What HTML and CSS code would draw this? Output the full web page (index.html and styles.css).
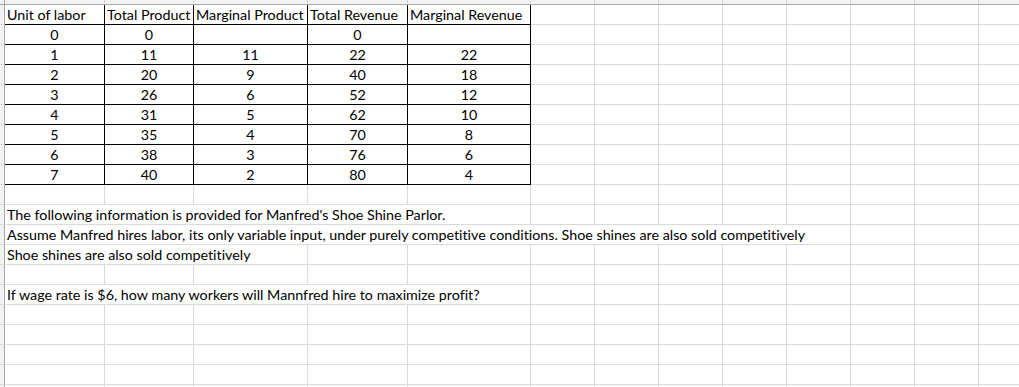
FILE: index.html
```html
<!DOCTYPE html>
<html>
<head>
<meta charset="utf-8">
<link rel="stylesheet" href="styles.css">
</head>
<body>
<div class="sheet">
  <div class="row head">
    <div class="c corner"></div><div class="c"></div><div class="c"></div><div class="c"></div><div class="c"></div><div class="c"></div><div class="c"></div><div class="c"></div><div class="c"></div><div class="c"></div><div class="c"></div><div class="c"></div><div class="c"></div><div class="c"></div>
  </div>
  <div class="row">
    <div class="c rh"></div><div class="c t">Unit of labor</div><div class="c t">Total Product</div><div class="c t">Marginal Product</div><div class="c t">Total Revenue</div><div class="c t">Marginal Revenue</div><div class="c"></div><div class="c"></div><div class="c"></div><div class="c"></div><div class="c"></div><div class="c"></div><div class="c"></div><div class="c"></div>
  </div>
  <div class="row">
    <div class="c rh"></div><div class="c t n">0</div><div class="c t n">0</div><div class="c t n"></div><div class="c t n">0</div><div class="c t n"></div><div class="c"></div><div class="c"></div><div class="c"></div><div class="c"></div><div class="c"></div><div class="c"></div><div class="c"></div><div class="c"></div>
  </div>
  <div class="row">
    <div class="c rh"></div><div class="c t n">1</div><div class="c t n">11</div><div class="c t n">11</div><div class="c t n">22</div><div class="c t n">22</div><div class="c"></div><div class="c"></div><div class="c"></div><div class="c"></div><div class="c"></div><div class="c"></div><div class="c"></div><div class="c"></div>
  </div>
  <div class="row">
    <div class="c rh"></div><div class="c t n">2</div><div class="c t n">20</div><div class="c t n">9</div><div class="c t n">40</div><div class="c t n">18</div><div class="c"></div><div class="c"></div><div class="c"></div><div class="c"></div><div class="c"></div><div class="c"></div><div class="c"></div><div class="c"></div>
  </div>
  <div class="row">
    <div class="c rh"></div><div class="c t n">3</div><div class="c t n">26</div><div class="c t n">6</div><div class="c t n">52</div><div class="c t n">12</div><div class="c"></div><div class="c"></div><div class="c"></div><div class="c"></div><div class="c"></div><div class="c"></div><div class="c"></div><div class="c"></div>
  </div>
  <div class="row">
    <div class="c rh"></div><div class="c t n">4</div><div class="c t n">31</div><div class="c t n">5</div><div class="c t n">62</div><div class="c t n">10</div><div class="c"></div><div class="c"></div><div class="c"></div><div class="c"></div><div class="c"></div><div class="c"></div><div class="c"></div><div class="c"></div>
  </div>
  <div class="row">
    <div class="c rh"></div><div class="c t n">5</div><div class="c t n">35</div><div class="c t n">4</div><div class="c t n">70</div><div class="c t n">8</div><div class="c"></div><div class="c"></div><div class="c"></div><div class="c"></div><div class="c"></div><div class="c"></div><div class="c"></div><div class="c"></div>
  </div>
  <div class="row">
    <div class="c rh"></div><div class="c t n">6</div><div class="c t n">38</div><div class="c t n">3</div><div class="c t n">76</div><div class="c t n">6</div><div class="c"></div><div class="c"></div><div class="c"></div><div class="c"></div><div class="c"></div><div class="c"></div><div class="c"></div><div class="c"></div>
  </div>
  <div class="row">
    <div class="c rh"></div><div class="c t n">7</div><div class="c t n">40</div><div class="c t n">2</div><div class="c t n">80</div><div class="c t n">4</div><div class="c"></div><div class="c"></div><div class="c"></div><div class="c"></div><div class="c"></div><div class="c"></div><div class="c"></div><div class="c"></div>
  </div>
  <div class="row">
    <div class="c rh"></div><div class="c"></div><div class="c"></div><div class="c"></div><div class="c"></div><div class="c"></div><div class="c"></div><div class="c"></div><div class="c"></div><div class="c"></div><div class="c"></div><div class="c"></div><div class="c"></div><div class="c"></div>
  </div>
  <div class="row">
    <div class="c rh"></div><div class="c s5">The following information is provided for Manfred's Shoe Shine Parlor.</div><div class="c"></div><div class="c"></div><div class="c"></div><div class="c"></div><div class="c"></div><div class="c"></div><div class="c"></div><div class="c"></div>
  </div>
  <div class="row">
    <div class="c rh"></div><div class="c s10">Assume Manfred hires labor, its only variable input, under purely competitive conditions. Shoe shines are also sold competitively</div><div class="c"></div><div class="c"></div><div class="c"></div>
  </div>
  <div class="row">
    <div class="c rh"></div><div class="c s3">Shoe shines are also sold competitively</div><div class="c"></div><div class="c"></div><div class="c"></div><div class="c"></div><div class="c"></div><div class="c"></div><div class="c"></div><div class="c"></div><div class="c"></div><div class="c"></div>
  </div>
  <div class="row">
    <div class="c rh"></div><div class="c"></div><div class="c"></div><div class="c"></div><div class="c"></div><div class="c"></div><div class="c"></div><div class="c"></div><div class="c"></div><div class="c"></div><div class="c"></div><div class="c"></div><div class="c"></div><div class="c"></div>
  </div>
  <div class="row">
    <div class="c rh"></div><div class="c s5">If wage rate is $6, how many workers will Mannfred hire to maximize profit?</div><div class="c"></div><div class="c"></div><div class="c"></div><div class="c"></div><div class="c"></div><div class="c"></div><div class="c"></div><div class="c"></div>
  </div>
  <div class="row">
    <div class="c rh"></div><div class="c"></div><div class="c"></div><div class="c"></div><div class="c"></div><div class="c"></div><div class="c"></div><div class="c"></div><div class="c"></div><div class="c"></div><div class="c"></div><div class="c"></div><div class="c"></div><div class="c"></div>
  </div>
  <div class="row">
    <div class="c rh"></div><div class="c"></div><div class="c"></div><div class="c"></div><div class="c"></div><div class="c"></div><div class="c"></div><div class="c"></div><div class="c"></div><div class="c"></div><div class="c"></div><div class="c"></div><div class="c"></div><div class="c"></div>
  </div>
  <div class="row">
    <div class="c rh"></div><div class="c"></div><div class="c"></div><div class="c"></div><div class="c"></div><div class="c"></div><div class="c"></div><div class="c"></div><div class="c"></div><div class="c"></div><div class="c"></div><div class="c"></div><div class="c"></div><div class="c"></div>
  </div>
  <div class="row">
    <div class="c rh"></div><div class="c"></div><div class="c"></div><div class="c"></div><div class="c"></div><div class="c"></div><div class="c"></div><div class="c"></div><div class="c"></div><div class="c"></div><div class="c"></div><div class="c"></div><div class="c"></div><div class="c"></div>
  </div>
  <div class="row">
    <div class="c rh"></div><div class="c"></div><div class="c"></div><div class="c"></div><div class="c"></div><div class="c"></div><div class="c"></div><div class="c"></div><div class="c"></div><div class="c"></div><div class="c"></div><div class="c"></div><div class="c"></div><div class="c"></div>
  </div>
</div>
</body>
</html>
```
FILE: styles.css
```css
html, body {
  margin: 0;
  padding: 0;
  background: #ffffff;
  overflow: hidden;
}

.sheet {
  width: 1019px;
  height: 387px;
  overflow: hidden;
  font-family: Lato, "Liberation Sans", sans-serif;
  font-size: 14.3px;
  font-variant-ligatures: none;
  color: #000;
}

.row {
  display: grid;
  grid-template-columns: 5px 100px 89px 114px 100px 123px repeat(8, 64px);
  height: 20px;
}

.row.head {
  height: 5px;
}

.c {
  box-sizing: border-box;
  border-right: 1px solid #dadada;
  border-bottom: 1px solid #dadada;
  padding: 0 2px;
  line-height: 19px;
  white-space: nowrap;
  overflow: hidden;
}

.head .c {
  background: #f2f2f2;
  border-bottom-color: #a8a8a8;
  border-right-color: #d4d4d4;
  padding: 0;
}

.head .corner {
  border-right-color: #a8a8a8;
}

.rh {
  background: #f2f2f2;
  border-right-color: #a8a8a8;
  padding: 0;
}

.t {
  border-right-color: #000;
  border-bottom-color: #000;
}

.n {
  text-align: center;
}

.s3 { grid-column: span 3; }
.s5 { grid-column: span 5; }
.s10 { grid-column: span 10; }
```
